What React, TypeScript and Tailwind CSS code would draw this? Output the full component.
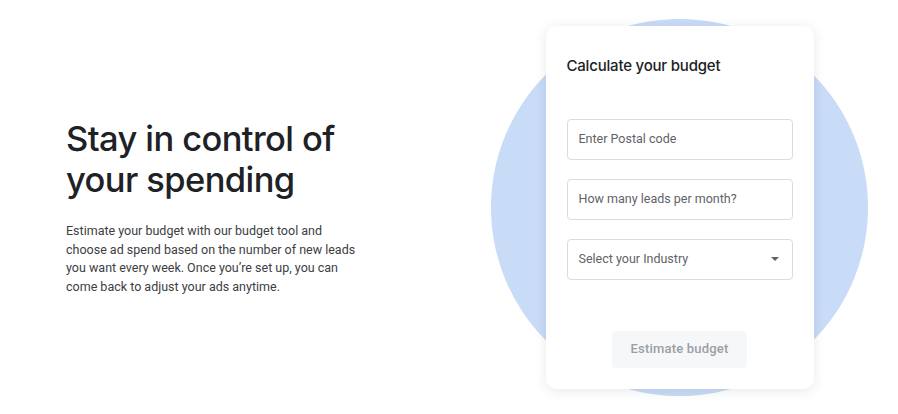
export default function App() {
  return (
    <main className="flex h-[414px] w-[898px] items-center overflow-hidden bg-white">
      <section className="w-[491px] shrink-0 pl-[66px] pr-6">
        <h1 className="font-['Inter',sans-serif] text-[34.5px] font-medium leading-[41px] tracking-[-0.6px] text-[#202124]">
          Stay in control of
          <br />
          your spending
        </h1>
        <p className="mt-[22px] w-[292px] font-['Roboto',sans-serif] text-[12.5px] leading-[18.5px] text-[#3c4043]">
          Estimate your budget with our budget tool and choose ad spend based on the number of new leads you want every week. Once you’re set up, you can come back to adjust your ads anytime.
        </p>
      </section>

      <div className="grid shrink-0 place-items-center">
        <div className="col-start-1 row-start-1 h-[377px] w-[377px] rounded-full bg-[#c8dbf7]" />
        <div className="col-start-1 row-start-1 flex h-[363px] w-[268px] flex-col rounded-[10px] bg-white px-[21px] pt-[30px] shadow-[0_2px_12px_rgba(60,64,67,0.12)]">
          <h2 className="font-['Inter',sans-serif] text-[15px] font-medium leading-5 tracking-[-0.2px] text-[#202124]">
            Calculate your budget
          </h2>
          <div className="mt-[43px] flex flex-col gap-[19px]">
            <div className="flex h-[41px] items-center rounded-[4px] border border-[#dadce0] px-[11px] font-['Roboto',sans-serif] text-[12.5px] text-[#5f6368]">
              Enter Postal code
            </div>
            <div className="flex h-[41px] items-center rounded-[4px] border border-[#dadce0] px-[11px] font-['Roboto',sans-serif] text-[12.5px] text-[#5f6368]">
              How many leads per month?
            </div>
            <div className="flex h-[41px] items-center justify-between rounded-[4px] border border-[#dadce0] pl-[11px] pr-[13px] font-['Roboto',sans-serif] text-[12.5px] text-[#5f6368]">
              <span>Select your Industry</span>
              <svg width="8" height="4" viewBox="0 0 8 4" aria-hidden="true">
                <path d="M0 0h8L4 4z" fill="#5f6368" />
              </svg>
            </div>
          </div>
          <div className="mt-[51px] flex justify-center">
            <button className="h-[37px] w-[135px] rounded-[4px] bg-[#f5f7f8] font-['Roboto',sans-serif] text-[13px] font-medium tracking-[0.2px] text-[#9aa0a6]">
              Estimate budget
            </button>
          </div>
        </div>
      </div>
    </main>
  );
}
